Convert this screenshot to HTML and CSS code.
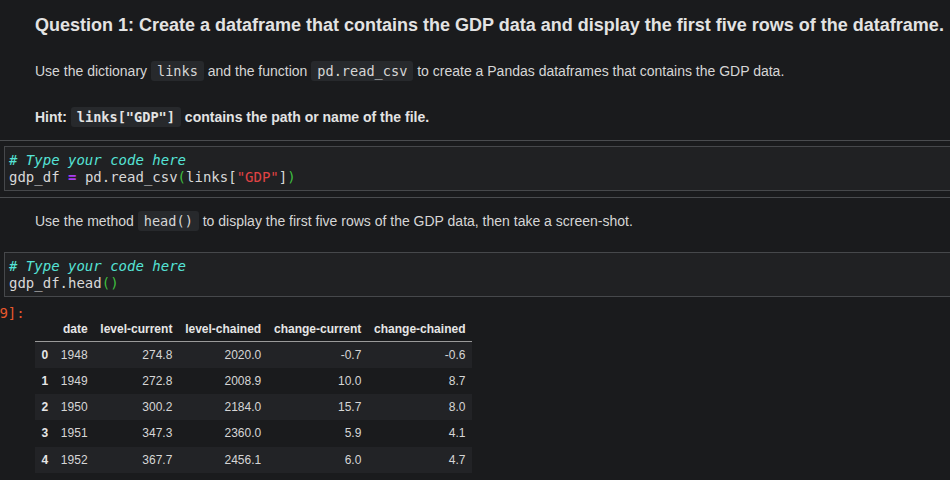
FILE: index.html
```html
<!DOCTYPE html>
<html lang="en">
<head>
<meta charset="utf-8">
<title>GDP notebook</title>
<link rel="stylesheet" href="styles.css">
</head>
<body>
<main class="nb">
  <section class="md first">
    <h3 class="title">Question 1: Create a dataframe that contains the GDP data and display the first five rows of the dataframe.</h3>
    <p class="para">Use the dictionary <code class="ic">links</code> and the function <code class="ic">pd.read_csv</code> to create a Pandas dataframes that contains the GDP data.</p>
    <p class="para hint"><strong>Hint: <code class="ic bold">links["GDP"]</code> contains the path or name of the file.</strong></p>
  </section>
  <div class="rule"></div>
  <div class="code first-code"><pre class="src"><span class="cm"># Type your code here</span>
gdp_df <span class="op">=</span> pd.read_csv<span class="pn">(</span>links[<span class="st">"GDP"</span>]<span class="pn">)</span></pre></div>
  <div class="rule"></div>
  <section class="md second">
    <p class="para">Use the method <code class="ic">head()</code> to display the first five rows of the GDP data, then take a screen-shot.</p>
  </section>
  <div class="code second-code"><pre class="src"><span class="cm"># Type your code here</span>
gdp_df.head<span class="pn">()</span></pre></div>
  <div class="output">
    <div class="prompt">[9]:</div>
    <table class="df">
      <thead>
        <tr><th></th><th>date</th><th>level-current</th><th>level-chained</th><th>change-current</th><th>change-chained</th></tr>
      </thead>
      <tbody>
        <tr><th>0</th><td>1948</td><td>274.8</td><td>2020.0</td><td>-0.7</td><td>-0.6</td></tr>
        <tr><th>1</th><td>1949</td><td>272.8</td><td>2008.9</td><td>10.0</td><td>8.7</td></tr>
        <tr><th>2</th><td>1950</td><td>300.2</td><td>2184.0</td><td>15.7</td><td>8.0</td></tr>
        <tr><th>3</th><td>1951</td><td>347.3</td><td>2360.0</td><td>5.9</td><td>4.1</td></tr>
        <tr><th>4</th><td>1952</td><td>367.7</td><td>2456.1</td><td>6.0</td><td>4.7</td></tr>
      </tbody>
    </table>
  </div>
</main>
</body>
</html>
```

FILE: styles.css
```css
html, body {
  margin: 0;
  padding: 0;
  background: #1a1b1d;
  overflow: hidden;
}

body {
  width: 950px;
  height: 480px;
  font-family: "Liberation Sans", Arial, sans-serif;
  color: #d6d6d6;
}

.nb {
  display: flex;
  flex-direction: column;
}

.md {
  padding-left: 35px;
}

.md.first {
  padding-top: 14px;
}

.title {
  margin: 0;
  font-size: 18px;
  line-height: 22px;
  font-weight: bold;
  color: #e3e3e3;
  white-space: nowrap;
}

.para {
  margin: 25px 0 0;
  font-size: 14px;
  line-height: 20px;
  white-space: nowrap;
}

.hint {
  margin-top: 26px;
  color: #e3e3e3;
}

.ic {
  font-family: "DejaVu Sans Mono", monospace;
  font-size: 13.6px;
  background: #27292c;
  color: #d6d6d6;
  padding: 2px 6px;
  border-radius: 3px;
}

.ic.bold {
  font-weight: bold;
  color: #e3e3e3;
}

.rule {
  height: 1px;
  background: #4a4c4f;
  width: 960px;
}

.md.first + .rule {
  margin-top: 13px;
}

.code {
  margin-left: 4px;
  width: 960px;
  border: 1px solid #46484b;
  background: #202123;
  padding: 5px 0 4px 4px;
}

.first-code {
  margin-top: 5px;
  margin-bottom: 6px;
}

.second {
  padding-top: 13px;
}

.second .para {
  margin-top: 0;
}

.second-code {
  margin-top: 21px;
}

.src {
  margin: 0;
  font-family: "DejaVu Sans Mono", monospace;
  font-size: 14px;
  line-height: 17px;
  color: #d8d8d8;
}

.cm { color: #55e3d6; font-style: italic; }
.op { color: #a83cf0; font-weight: bold; }
.pn { color: #3fbf3f; }
.st { color: #e04343; }

.output {
  display: flex;
  align-items: flex-start;
  margin-top: 8px;
}

.prompt {
  width: 35px;
  margin-left: -9px;
  flex: none;
  font-family: "DejaVu Sans Mono", monospace;
  font-size: 14px;
  line-height: 17px;
  color: #e8582c;
}

.df {
  margin-left: 9px;
  margin-top: 11px;
  border-collapse: collapse;
  font-family: "Liberation Sans", Arial, sans-serif;
  font-size: 12px;
  color: #d6d6d6;
}

.df th, .df td {
  padding: 0 6.4px;
  text-align: right;
  white-space: nowrap;
}

.df thead th {
  font-weight: bold;
  color: #e6e6e6;
  height: 25px;
  vertical-align: middle;
  border-bottom: 1px solid #9a9a9a;
}

.df tbody th {
  font-weight: bold;
  color: #e6e6e6;
  text-align: left;
}

.df tbody tr {
  height: 26.25px;
}

.df tbody tr:nth-child(odd) {
  background: #222326;
}
```
